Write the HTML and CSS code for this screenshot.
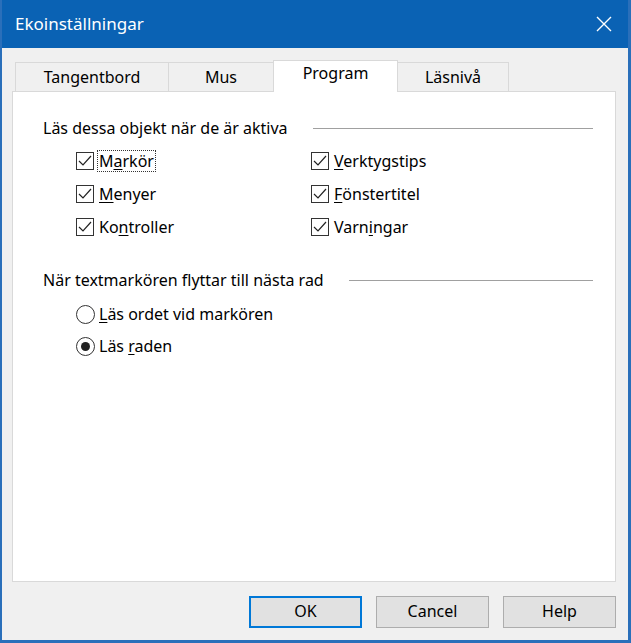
FILE: index.html
```html
<!DOCTYPE html>
<html lang="sv">
<head>
<meta charset="utf-8">
<title>Ekoinställningar</title>
<link rel="stylesheet" href="styles.css">
</head>
<body>
<div class="window">
  <div class="titlebar">
    <span class="title">Ekoinställningar</span>
    <span class="close">
      <svg width="16" height="16" viewBox="0 0 16 16"><path d="M1 1 L15 15 M15 1 L1 15" stroke="#fff" stroke-width="1.4" fill="none"/></svg>
    </span>
  </div>
  <div class="content">
    <div class="tabs">
      <div class="tab t1">Tangentbord</div>
      <div class="tab t2">Mus</div>
      <div class="tab active t3">Program</div>
      <div class="tab t4">Läsnivå</div>
    </div>
    <div class="panel">
      <div class="group-head first">
        <span class="group-label">Läs dessa objekt när de är aktiva</span>
        <span class="rule"></span>
      </div>
      <div class="checks">
        <label class="check"><span class="box"><svg width="16" height="16" viewBox="0 0 16 16"><path d="M2 8 L6 12 L14 3" stroke="#222" stroke-width="1.2" fill="none"/></svg></span><span class="lbl focus">M<u>a</u>rkör</span></label>
        <label class="check"><span class="box"><svg width="16" height="16" viewBox="0 0 16 16"><path d="M2 8 L6 12 L14 3" stroke="#222" stroke-width="1.2" fill="none"/></svg></span><span class="lbl"><u>V</u>erktygstips</span></label>
        <label class="check"><span class="box"><svg width="16" height="16" viewBox="0 0 16 16"><path d="M2 8 L6 12 L14 3" stroke="#222" stroke-width="1.2" fill="none"/></svg></span><span class="lbl"><u>M</u>enyer</span></label>
        <label class="check"><span class="box"><svg width="16" height="16" viewBox="0 0 16 16"><path d="M2 8 L6 12 L14 3" stroke="#222" stroke-width="1.2" fill="none"/></svg></span><span class="lbl"><u>F</u>önstertitel</span></label>
        <label class="check"><span class="box"><svg width="16" height="16" viewBox="0 0 16 16"><path d="M2 8 L6 12 L14 3" stroke="#222" stroke-width="1.2" fill="none"/></svg></span><span class="lbl">Ko<u>n</u>troller</span></label>
        <label class="check"><span class="box"><svg width="16" height="16" viewBox="0 0 16 16"><path d="M2 8 L6 12 L14 3" stroke="#222" stroke-width="1.2" fill="none"/></svg></span><span class="lbl">Varn<u>i</u>ngar</span></label>
      </div>
      <div class="group-head second">
        <span class="group-label">När textmarkören flyttar till nästa rad</span>
        <span class="rule"></span>
      </div>
      <div class="radios">
        <label class="radio"><span class="circle"></span><span class="lbl"><u>L</u>äs ordet vid markören</span></label>
        <label class="radio"><span class="circle on"><span class="dot"></span></span><span class="lbl">Läs <u>r</u>aden</span></label>
      </div>
    </div>
    <div class="buttons">
      <button class="btn default">OK</button>
      <button class="btn">Cancel</button>
      <button class="btn">Help</button>
    </div>
  </div>
</div>
</body>
</html>
```
FILE: styles.css
```css
html, body {
  margin: 0;
  padding: 0;
  background: #f0f0f0;
}
body {
  font-family: "Noto Sans", "Open Sans", sans-serif;
  font-size: 16px;
  color: #000;
}
.window {
  width: 631px;
  height: 643px;
  box-sizing: border-box;
  border-left: 2px solid #2a6fba;
  border-right: 3px solid #2a6fba;
  border-bottom: 3px solid #2a6fba;
  background: #f0f0f0;
  display: flex;
  flex-direction: column;
}
.titlebar {
  height: 48px;
  flex: none;
  background: #0a62b4;
  display: flex;
  align-items: center;
  justify-content: space-between;
  padding-left: 13px;
}
.title {
  color: #fff;
  font-size: 17px;
  padding-bottom: 2px;
}
.close {
  width: 46px;
  height: 48px;
  display: flex;
  align-items: center;
  justify-content: center;
  margin-right: 1px;
}
.content {
  flex: 1;
  padding: 12px 12px 0 10px;
  display: flex;
  flex-direction: column;
}
.tabs {
  display: flex;
  align-items: flex-end;
  height: 31px;
  padding-left: 3px;
  position: relative;
  z-index: 2;
}
.tab {
  box-sizing: border-box;
  height: 29px;
  border: 1px solid #d9d9d9;
  border-bottom: none;
  border-right: none;
  background: #f0f0f0;
  display: flex;
  align-items: center;
  justify-content: center;
  padding-bottom: 1px;
}
.t1 { width: 153px; }
.t2 { width: 105px; }
.t3 { width: 125px; }
.t4 { width: 111px; border-right: 1px solid #d9d9d9; }
.tab.active {
  height: 32px;
  margin-bottom: -1px;
  background: #fff;
  border-right: 1px solid #d9d9d9;
  padding-bottom: 7px;
}
.tab.active + .tab { border-left: none; }
.panel {
  height: 491px;
  box-sizing: border-box;
  border: 1px solid #d9d9d9;
  background: #fff;
  display: flex;
  flex-direction: column;
}
.group-head {
  display: flex;
  align-items: center;
  height: 20px;
  padding: 0 22px 0 30px;
}
.group-head.first { margin-top: 26px; }
.group-head.second { margin-top: 27px; }
.rule {
  flex: 1;
  height: 1px;
  background: #a0a0a0;
  margin-left: 25px;
  margin-top: 1px;
}
.checks {
  display: grid;
  grid-template-columns: 235px auto;
  grid-auto-rows: 33px;
  margin: 6px 0 0 63px;
}
.check, .radio {
  display: flex;
  align-items: center;
}
.box {
  width: 18px;
  height: 18px;
  box-sizing: border-box;
  border: 1px solid #333;
  background: #fff;
  display: flex;
  align-items: center;
  justify-content: center;
  margin-right: 5px;
}
.box svg { display: block; }
.lbl { line-height: 20px; }
.lbl u { text-decoration-thickness: 1px; text-underline-offset: 2px; }
.focus {
  outline: 1px dotted #333;
  outline-offset: 0;
  padding: 0 1px;
  margin-left: -1px;
}
.radios {
  display: flex;
  flex-direction: column;
  margin: 8px 0 0 63px;
}
.radio { height: 32px; }
.circle {
  width: 19px;
  height: 19px;
  box-sizing: border-box;
  border: 1px solid #333;
  border-radius: 50%;
  background: #fff;
  display: flex;
  align-items: center;
  justify-content: center;
  margin-right: 4px;
}
.dot {
  width: 9px;
  height: 9px;
  border-radius: 50%;
  background: #222;
}
.buttons {
  display: flex;
  justify-content: flex-end;
  gap: 14px;
  margin-top: 14px;
}
.btn {
  width: 113px;
  height: 32px;
  box-sizing: border-box;
  border: 1px solid #adadad;
  background: #e1e1e1;
  font-family: "Noto Sans", "Open Sans", sans-serif;
  font-size: 16px;
  color: #000;
  padding: 0 0 2px;
}
.btn.default {
  border: 2px solid #0078d7;
}
```
